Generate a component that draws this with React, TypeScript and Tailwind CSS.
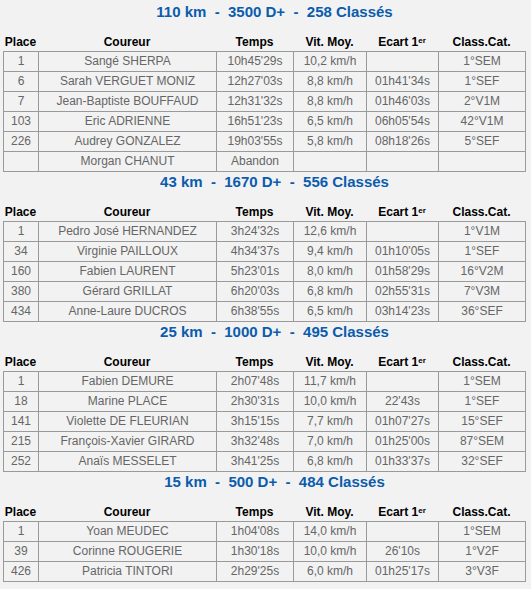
import React from "react";

type Row = [string, string, string, string, string, string];
type Section = { title: string; rows: Row[] };

const sections: Section[] = [
  {
    title: "110 km  -  3500 D+  -  258 Classés",
    rows: [
      ["1", "Sangé SHERPA", "10h45'29s", "10,2 km/h", "", "1°SEM"],
      ["6", "Sarah VERGUET MONIZ", "12h27'03s", "8,8 km/h", "01h41'34s", "1°SEF"],
      ["7", "Jean-Baptiste BOUFFAUD", "12h31'32s", "8,8 km/h", "01h46'03s", "2°V1M"],
      ["103", "Eric ADRIENNE", "16h51'23s", "6,5 km/h", "06h05'54s", "42°V1M"],
      ["226", "Audrey GONZALEZ", "19h03'55s", "5,8 km/h", "08h18'26s", "5°SEF"],
      ["", "Morgan CHANUT", "Abandon", "", "", ""],
    ],
  },
  {
    title: "43 km  -  1670 D+  -  556 Classés",
    rows: [
      ["1", "Pedro José HERNANDEZ", "3h24'32s", "12,6 km/h", "", "1°V1M"],
      ["34", "Virginie PAILLOUX", "4h34'37s", "9,4 km/h", "01h10'05s", "1°SEF"],
      ["160", "Fabien LAURENT", "5h23'01s", "8,0 km/h", "01h58'29s", "16°V2M"],
      ["380", "Gérard GRILLAT", "6h20'03s", "6,8 km/h", "02h55'31s", "7°V3M"],
      ["434", "Anne-Laure DUCROS", "6h38'55s", "6,5 km/h", "03h14'23s", "36°SEF"],
    ],
  },
  {
    title: "25 km  -  1000 D+  -  495 Classés",
    rows: [
      ["1", "Fabien DEMURE", "2h07'48s", "11,7 km/h", "", "1°SEM"],
      ["18", "Marine PLACE", "2h30'31s", "10,0 km/h", "22'43s", "1°SEF"],
      ["141", "Violette DE FLEURIAN", "3h15'15s", "7,7 km/h", "01h07'27s", "15°SEF"],
      ["215", "François-Xavier GIRARD", "3h32'48s", "7,0 km/h", "01h25'00s", "87°SEM"],
      ["252", "Anaïs MESSELET", "3h41'25s", "6,8 km/h", "01h33'37s", "32°SEF"],
    ],
  },
  {
    title: "15 km  -  500 D+  -  484 Classés",
    rows: [
      ["1", "Yoan MEUDEC", "1h04'08s", "14,0 km/h", "", "1°SEM"],
      ["39", "Corinne ROUGERIE", "1h30'18s", "10,0 km/h", "26'10s", "1°V2F"],
      ["426", "Patricia TINTORI", "2h29'25s", "6,0 km/h", "01h25'17s", "3°V3F"],
    ],
  },
];

const cols = "grid grid-cols-[35px_178px_77px_73px_72px_87px]";

function Table({ s }: { s: Section }) {
  return (
    <div className="flex flex-col mb-[-1px]">
      <div className="h-[24px] flex items-center justify-center whitespace-pre text-[15px] font-bold text-[#0b5cad] pl-[18px] pb-[1px]">
        {s.title}
      </div>
      <div className={`${cols} ml-[3px] h-[26px] items-end pb-[2px]`}>
        {["Place", "Coureur", "Temps", "Vit. Moy.", "ECART", "Class.Cat."].map((h, i) => (
          <div
            key={i}
            className="h-[14px] text-[12px] leading-[14px] font-bold text-black text-center whitespace-nowrap"
          >
            {h === "ECART" ? (
              <span>
                Ecart 1<span className="text-[8px] leading-none relative top-[-3px]">er</span>
              </span>
            ) : (
              h
            )}
          </div>
        ))}
      </div>
      <div className="ml-[3px] w-[523px] border-l border-t border-[#9a9a9a]">
        {s.rows.map((r, ri) => (
          <div key={ri} className={cols}>
            {r.map((c, ci) => (
              <div
                key={ci}
                className="h-[20px] border-r border-b border-[#9a9a9a] text-[12px] leading-[19px] text-[#666666] text-center whitespace-nowrap"
              >
                {c}
              </div>
            ))}
          </div>
        ))}
      </div>
    </div>
  );
}

export default function App() {
  return (
    <div
      className="w-[531px] h-[589px] bg-[#f2f2f2] overflow-hidden flex flex-col pt-px"
      style={{ fontFamily: '"Liberation Sans", Arial, sans-serif' }}
    >
      {sections.map((s, i) => (
        <Table key={i} s={s} />
      ))}
    </div>
  );
}
